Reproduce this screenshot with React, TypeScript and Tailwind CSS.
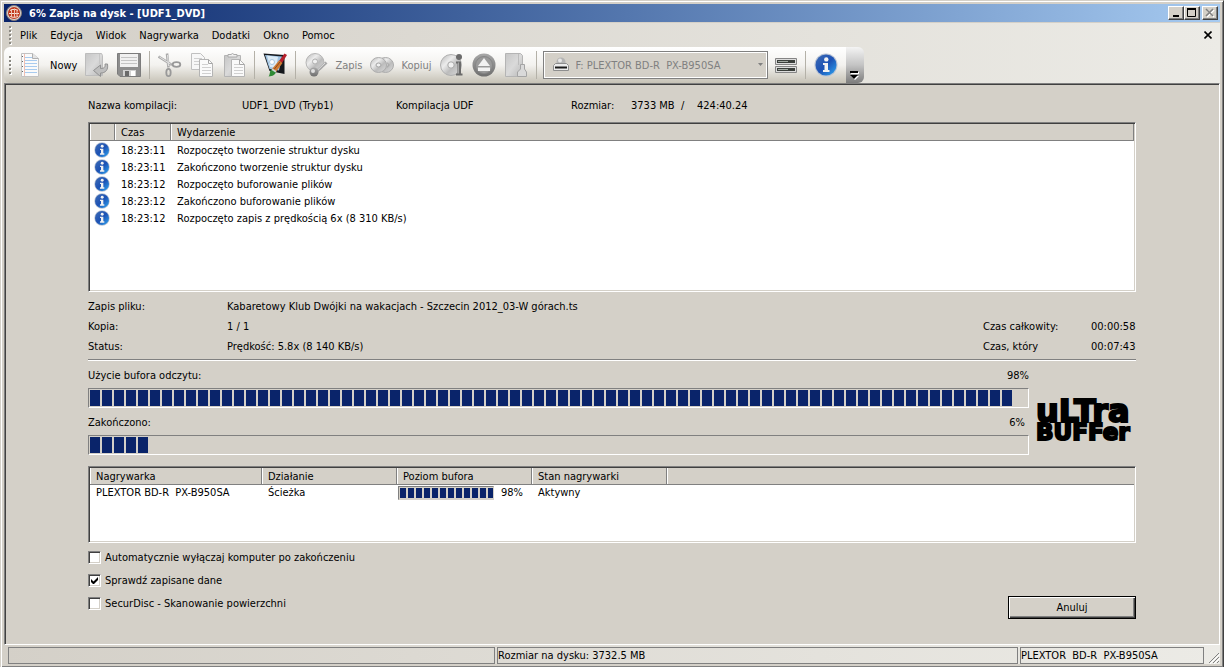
import type { ReactNode } from "react";
import clsx from "clsx";

const SUNKEN =
    "border border-[#808080] border-r-white border-b-white p-px shadow-[inset_1px_1px_#404040,inset_-1px_-1px_#d4d0c8]";

const MENU = ["Plik", "Edycja", "Widok", "Nagrywarka", "Dodatki", "Okno", "Pomoc"];

const EVENTS = [
    { time: "18:23:11", text: "Rozpoczęto tworzenie struktur dysku" },
    { time: "18:23:11", text: "Zakończono tworzenie struktur dysku" },
    { time: "18:23:12", text: "Rozpoczęto buforowanie plików" },
    { time: "18:23:12", text: "Zakończono buforowanie plików" },
    { time: "18:23:12", text: "Rozpoczęto zapis z prędkością 6x (8 310 KB/s)" },
];

const OPTIONS = [
    { id: "shutdown", label: "Automatycznie wyłączaj komputer po zakończeniu", checked: false },
    { id: "verify", label: "Sprawdź zapisane dane", checked: true },
    { id: "securdisc", label: "SecurDisc - Skanowanie powierzchni", checked: false },
];

/* ---------- icons ---------- */

function Gradients() {
    return (
        <svg width="0" height="0" className="absolute" aria-hidden="true">
            <defs>
                <linearGradient id="blue" x1="0" y1="0" x2="1" y2="1">
                    <stop offset="0" stopColor="#3f6cb4" />
                    <stop offset=".5" stopColor="#1d52b4" />
                    <stop offset="1" stopColor="#2fa8f4" />
                </linearGradient>
                <linearGradient id="grey" x1="0" y1="0" x2="1" y2="1">
                    <stop offset="0" stopColor="#c6c6c6" />
                    <stop offset=".5" stopColor="#dadada" />
                    <stop offset="1" stopColor="#b8b8b8" />
                </linearGradient>
                <linearGradient id="disc" x1="0" y1="0" x2="1" y2="1">
                    <stop offset="0" stopColor="#b4b4b4" />
                    <stop offset=".35" stopColor="#ececec" />
                    <stop offset=".6" stopColor="#bcbcbc" />
                    <stop offset="1" stopColor="#dcdcdc" />
                </linearGradient>
                <linearGradient id="dark" x1="0" y1="0" x2="0" y2="1">
                    <stop offset="0" stopColor="#a8a8a8" />
                    <stop offset="1" stopColor="#6e6e6e" />
                </linearGradient>
            </defs>
        </svg>
    );
}

function Icon({ size = 24, children }: { size?: number; children: ReactNode }) {
    return (
        <svg width={size} height={size} viewBox="0 0 24 24" fill="none" className="shrink-0" aria-hidden="true">
            {children}
        </svg>
    );
}

function InfoIcon({ size }: { size?: number }) {
    return (
        <Icon size={size}>
            <circle cx="12" cy="12" r="11.5" fill="#b9c3d4" />
            <circle cx="12" cy="12" r="10.5" fill="url(#blue)" />
            <circle cx="12.3" cy="6.4" r="2.2" fill="#f2f2f2" />
            <path d="M9 10h5v7h1.500v2H9v-2h1.500v-5H9z" fill="#f2f2f2" />
        </Icon>
    );
}

function AppIcon() {
    return (
        <svg width="16" height="16" viewBox="0 0 16 16" fill="none" aria-hidden="true">
            <circle cx="8" cy="8" r="7.5" fill="#d8d2ce" stroke="#8c7f79" />
            <circle cx="8" cy="8" r="6" fill="#c23a1c" />
            <path d="M4 5.500c2-1.500 6-1.500 8 0M3 8.500h10M4 11.500c2 1 6 1 8 0" stroke="#f6e8df" />
            <path d="M5.500 4v8M8.500 3.500v9M11 4.500v7" stroke="#eec4b2" />
        </svg>
    );
}

function NewIcon() {
    return (
        <Icon>
            <path d="M2.500.5h11l6 5v18h-17z" fill="#fafafa" stroke="#c2c2c2" />
            <path d="M13.500.5v5h6" fill="#e4e4e4" stroke="#b0b0b0" />
            <path d="M6 4.500h7M6 7.500h12M6 10.500h12M6 13.500h12M6 16.500h12M6 19.500h12" stroke="#a8cbef" />
            <path d="M5.500 1v22" stroke="#f0c0b4" />
            <path d="M3.500 3v1M3.500 8v1M3.500 13v1M3.500 18v1" stroke="#666" />
        </Icon>
    );
}

function OpenIcon() {
    return (
        <Icon>
            <path d="M.5.5h16l1 2v20H.5z" fill="url(#grey)" stroke="#bdbdbd" />
            <path d="M14.500 1v10" stroke="#c6c6c6" />
            <path
                d="M22.500 11c1 6-2 9-7 9v3.500L8.500 17.500l7-5.500v3.500c4 0 5-1.500 4.500-4.500z"
                fill="#bebebe"
                stroke="#929292"
            />
        </Icon>
    );
}

function SaveIcon() {
    return (
        <Icon>
            <path d="M.5.5h23v23H3l-2.500-2.500z" fill="#8d8d8d" stroke="#7c7c7c" />
            <path d="M3 1h18v13H3z" fill="#f0f0f0" />
            <path d="M4 4.500h16M4 7.500h16M4 10.500h16" stroke="#c4c4c4" />
            <path d="M6 17h13v6H6z" fill="#d2d2d2" />
            <path d="M14 18h4v5h-4z" fill="#fff" />
            <path d="M8 18h4v5H8z" fill="#6a6a6a" />
        </Icon>
    );
}

function CutIcon() {
    return (
        <Icon>
            <path d="M.5 3.500 14 12M9 .5l1.500 14" stroke="#ababab" strokeWidth="2.600" />
            <path d="m1.500 4 11 7M9.500 2l1 11" stroke="#e2e2e2" />
            <ellipse cx="18.500" cy="11.500" rx="3.800" ry="2.300" stroke="#999" strokeWidth="1.800" />
            <ellipse cx="10.500" cy="19.500" rx="2.200" ry="3.600" stroke="#999" strokeWidth="1.800" />
        </Icon>
    );
}

function CopyIcon() {
    return (
        <Icon>
            <path d="M1.500.5h9l4 4v12h-13z" fill="#f7f7f7" stroke="#c0c0c0" />
            <path d="M4 5.500h8M4 8.500h8M4 11.500h8" stroke="#d0d0d0" />
            <path d="M9.500 6.500h9l4 4v13h-13z" fill="#fafafa" stroke="#b4b4b4" />
            <path d="M18.500 6.500v4h4" stroke="#a6a6a6" />
            <path d="M12 11.500h6M12 14.500h9M12 17.500h9M12 20.500h9" stroke="#d0d0d0" />
        </Icon>
    );
}

function PasteIcon() {
    return (
        <Icon>
            <path d="M2.500 2.500h16v21h-16z" fill="url(#grey)" stroke="#b4b4b4" />
            <path d="M6 4V1.500h3l1.500-1 1.500 1h3V4z" fill="#eee" stroke="#aaa" />
            <path d="M9.500 6.500h8l5 5v12h-13z" fill="#fafafa" stroke="#b4b4b4" />
            <path d="M17.500 6.500v5h5" stroke="#a6a6a6" />
            <path d="M12 11.500h5M12 14.500h9M12 17.500h9M12 20.500h9" stroke="#d0d0d0" />
        </Icon>
    );
}

function CoverIcon() {
    return (
        <Icon>
            <path d="m.5.5 21 1.500v19l-15-3z" fill="#15181c" />
            <path d="m2 2 17 1.500-3 14L6.500 16z" fill="#9fc3e2" />
            <path d="M4 2.500 15 4l-2 11-6-1z" fill="#dcebf6" />
            <circle cx="9" cy="9" r="2.500" fill="#fff" stroke="#a9c6dd" />
            <path d="m21.500.5 2.500 1.500-5 8-3-2z" fill="#b5202a" />
            <path d="m16 7.500 3.500 2.500-6.500 9-4-3z" fill="#d07a32" />
            <path d="m17 9-6 7.500" stroke="#8c4a1c" />
            <path d="m9 16 4 3c-1 3-3 4-7.500 4.500 2-2 .5-5.500 3.500-7.500z" fill="#2f8a35" />
            <path d="m9.500 15.500 4 2.500-1 1.500-4-2.500z" fill="#cfd4d8" />
        </Icon>
    );
}

function BurnIcon() {
    return (
        <Icon>
            <circle cx="11" cy="9.500" r="9" fill="url(#disc)" stroke="#b5b5b5" />
            <circle cx="11" cy="8.500" r="2.500" fill="#f0f0f0" stroke="#b0b0b0" />
            <path d="m22.500 9.500-10 9" stroke="#a9a9a9" strokeWidth="3" />
            <path d="m21 10-8 7.500" stroke="#dedede" />
            <circle cx="10" cy="19" r="4.500" fill="url(#dark)" />
            <circle cx="9" cy="18" r="2" fill="#e0e0e0" />
        </Icon>
    );
}

function CopyDiscIcon() {
    return (
        <Icon>
            <ellipse cx="15.500" cy="12" rx="8" ry="7.500" fill="url(#disc)" stroke="#acacac" />
            <ellipse cx="8.500" cy="12" rx="8" ry="7.500" fill="url(#disc)" stroke="#acacac" />
            <ellipse cx="8.500" cy="12" rx="2.500" ry="2" fill="#f0f0f0" stroke="#a4a4a4" />
            <path d="M17 10c2.500.5 2.500 3.500 0 4" stroke="#a4a4a4" />
        </Icon>
    );
}

function DiscInfoIcon() {
    return (
        <Icon>
            <circle cx="11" cy="12" r="10.500" fill="url(#disc)" stroke="#b0b0b0" />
            <circle cx="11" cy="12" r="3.200" fill="#f0f0f0" stroke="#a8a8a8" />
            <circle cx="19" cy="4" r="3" fill="#6b6b6b" />
            <path d="M16 8.500h5v12h1.500v2H16v-2h1.500v-10H16z" fill="#6b6b6b" />
            <path d="M18.500 9.500v11" stroke="#a5a5a5" />
        </Icon>
    );
}

function EjectIcon() {
    return (
        <Icon>
            <circle cx="12" cy="12" r="11.500" fill="url(#dark)" />
            <circle cx="12" cy="12" r="8.500" fill="#9a9a9a" stroke="#868686" />
            <path d="m12 5 6 8H6z" fill="#f2f2f2" />
            <path d="M6 14.500h12V18H6z" fill="#f2f2f2" />
        </Icon>
    );
}

function EraseIcon() {
    return (
        <Icon>
            <path d="M1.500.5h15l2 2v21h-17z" fill="url(#grey)" stroke="#b4b4b4" />
            <path d="M14.500 1v11" stroke="#bdbdbd" />
            <path d="M13.500 23.500V19l3-3v-4.500h4V16l2 3v4.500z" fill="#d9d9d9" stroke="#a4a4a4" />
        </Icon>
    );
}

function DriveIcon() {
    return (
        <svg width="16" height="15" viewBox="0 0 16 15" fill="none" aria-hidden="true">
            <circle cx="8" cy="5" r="4.500" fill="#b4b4b4" />
            <circle cx="7" cy="3.500" r="2" fill="#e6e6e6" />
            <path d="M2.500 6.500h11l2 2v5H.5v-5z" fill="#ececec" stroke="#8e8e8e" />
            <path d="M2 10.500h12" stroke="#1c1c1c" strokeWidth="2" />
        </svg>
    );
}

function RecordersIcon() {
    return (
        <svg width="22" height="15" viewBox="0 0 22 15" fill="none" aria-hidden="true">
            <path d="M.5.5h21v6H.5zM.5 8.500h21v6H.5z" fill="#dcdcdc" stroke="#858585" />
            <path d="M2 2h18v3H2zM2 10h18v3H2z" fill="#3b3f3b" />
            <path d="M3 3.500h10M3 11.500h10" stroke="#a1a8a1" />
        </svg>
    );
}

/* ---------- small controls ---------- */

function Separator() {
    return <span className="h-7 w-px shrink-0 bg-[#b4b1a8]" />;
}

function Grip() {
    return (
        <span className="flex w-[3px] shrink-0 flex-col gap-[2px]">
            {[0, 1, 2, 3, 4].map((i) => (
                <i key={i} className="size-[2px] bg-[#8b8982] shadow-[1px_1px_#fff]" />
            ))}
        </span>
    );
}

function ToolButton({ label, text, children }: { label: string; text?: string; children: ReactNode }) {
    return (
        <button type="button" aria-label={label} className="flex shrink-0 items-center gap-[7px]">
            {children}
            {text && <span className={text === "Nowy" ? "text-black" : "text-[#808080]"}>{text}</span>}
        </button>
    );
}

function Progress({ label, value, blocks, small }: { label: string; value: number; blocks: number; small?: boolean }) {
    return (
        <div
            role="progressbar"
            aria-label={label}
            aria-valuenow={value}
            className={clsx(
                "flex gap-[2px] overflow-hidden border border-[#808080] bg-[#d4d0c8] p-px",
                small ? "h-[14px] w-24 border-r-[#d4d0c8] border-b-[#d4d0c8]" : "h-5 border-r-white border-b-white",
            )}
        >
            {Array.from({ length: blocks }, (_, i) => (
                <span key={i} className={clsx("shrink-0 bg-[#0a246a]", small ? "w-[6px]" : "w-[10px]")} />
            ))}
        </div>
    );
}

function Th({ className, children }: { className?: string; children?: ReactNode }) {
    return (
        <th
            className={clsx(
                "h-[17px] border-r border-b border-[#808080] bg-[#d4d0c8] p-0 pl-[6px] text-left font-normal shadow-[inset_1px_0_#fff]",
                className,
            )}
        >
            {children}
        </th>
    );
}

function CaptionButton({ label, children }: { label: string; children: ReactNode }) {
    return (
        <button
            type="button"
            aria-label={label}
            className="flex h-[14px] w-4 items-center justify-center border border-white border-r-[#404040] border-b-[#404040] bg-[#d4d0c8] shadow-[inset_-1px_-1px_#808080]"
        >
            {children}
        </button>
    );
}

/* ---------- window parts ---------- */

function TitleBar() {
    return (
        <header className="flex h-[18px] items-center bg-linear-to-r from-[#0a246a] to-[#a6caf0] pr-[2px] pl-[2px]">
            <AppIcon />
            <h1 className="ml-[7px] flex-1 text-[11px] font-bold text-white">6% Zapis na dysk - [UDF1_DVD]</h1>
            <CaptionButton label="Minimalizuj">
                <svg width="12" height="10" viewBox="0 0 12 10">
                    <path d="M3 7h6v2H3z" />
                </svg>
            </CaptionButton>
            <CaptionButton label="Maksymalizuj">
                <svg width="12" height="10" viewBox="0 0 12 10" fill="none" stroke="#000">
                    <path d="M1.500 1v7.500h8V1M1 1.500h9" />
                    <path d="M1 .5h9" />
                </svg>
            </CaptionButton>
            <span className="w-[2px]" />
            <CaptionButton label="Zamknij">
                <svg width="12" height="10" viewBox="0 0 12 10" fill="none" strokeWidth="1.600">
                    <path d="m3 2 7 7m0-7L3 9" stroke="#fff" />
                    <path d="m2 1 7 7m0-7L2 8" stroke="#808080" />
                </svg>
            </CaptionButton>
        </header>
    );
}

function MenuBar() {
    return (
        <nav className="flex h-6 items-center pr-2 pl-[5px]">
            <Grip />
            <ul className="ml-[8px] flex flex-1 gap-[13px]">
                {MENU.map((item) => (
                    <li key={item}>
                        <button type="button">{item}</button>
                    </li>
                ))}
            </ul>
            <button type="button" aria-label="Zamknij dokument">
                <svg width="8" height="8" viewBox="0 0 8 8" stroke="#000" strokeWidth="1.600">
                    <path d="m.5.5 7 7m0-7-7 7" />
                </svg>
            </button>
        </nav>
    );
}

function Toolbar() {
    return (
        <div className="flex h-9">
            <div className="flex items-center rounded-l-md bg-linear-to-b from-white via-[#f3f2ef] to-[#c6c2b6] pr-2 pl-[5px]">
                <Grip />
                <div className="ml-[7px] flex items-center gap-2">
                    <ToolButton label="Nowy" text="Nowy">
                        <NewIcon />
                    </ToolButton>
                    <ToolButton label="Otwórz">
                        <OpenIcon />
                    </ToolButton>
                    <ToolButton label="Zapisz">
                        <SaveIcon />
                    </ToolButton>
                    <Separator />
                    <ToolButton label="Wytnij">
                        <CutIcon />
                    </ToolButton>
                    <ToolButton label="Kopiuj zaznaczenie">
                        <CopyIcon />
                    </ToolButton>
                    <ToolButton label="Wklej">
                        <PasteIcon />
                    </ToolButton>
                    <Separator />
                    <ToolButton label="Projektant okładek">
                        <CoverIcon />
                    </ToolButton>
                    <Separator />
                    <ToolButton label="Zapis" text="Zapis">
                        <BurnIcon />
                    </ToolButton>
                    <ToolButton label="Kopiuj" text="Kopiuj">
                        <CopyDiscIcon />
                    </ToolButton>
                    <ToolButton label="Informacje o dysku">
                        <DiscInfoIcon />
                    </ToolButton>
                    <ToolButton label="Wysuń">
                        <EjectIcon />
                    </ToolButton>
                    <ToolButton label="Wymaż">
                        <EraseIcon />
                    </ToolButton>
                    <Separator />
                </div>
                <div className="relative ml-[6px]">
                    <select
                        aria-label="Nagrywarka"
                        disabled
                        className="block h-7 w-[225px] appearance-none border border-[#808080] bg-[#d4d0c8] pl-8 text-[#808080] opacity-100 shadow-[inset_0_0_0_1px_#fff]"
                    >
                        <option>F: PLEXTOR BD-R{"\u00a0 "}PX-B950SA</option>
                    </select>
                    <span className="pointer-events-none absolute top-[6px] left-[10px]">
                        <DriveIcon />
                    </span>
                    <svg width="5" height="3" viewBox="0 0 5 3" className="pointer-events-none absolute top-3 right-[5px]">
                        <path d="M0 0h5L2.500 3z" fill="#808080" />
                    </svg>
                </div>
                <div className="ml-[7px] flex items-center gap-2">
                    <button type="button" aria-label="Wybierz nagrywarkę">
                        <RecordersIcon />
                    </button>
                    <Separator />
                    <ToolButton label="Informacje">
                        <InfoIcon />
                    </ToolButton>
                </div>
            </div>
            <button
                type="button"
                aria-label="Opcje paska narzędzi"
                className="flex w-[18px] items-end justify-center rounded-r-md bg-linear-to-b from-[#f4f4f4] via-[#c4c4c4] to-[#7d7d7d] pb-[3px]"
            >
                <svg width="9" height="9" viewBox="0 0 9 9">
                    <path d="M1 1h8v2H1zM1 5h8L5 9z" fill="#fff" />
                    <path d="M0 0h8v2H0zM0 4h8L4 8z" />
                </svg>
            </button>
        </div>
    );
}

function EventLog() {
    return (
        <div className={clsx("mt-[7px] h-[170px] bg-white", SUNKEN)}>
            <table className="w-full table-fixed border-separate border-spacing-0">
                <thead>
                    <tr>
                        <Th className="w-[25px]" />
                        <Th className="w-14">Czas</Th>
                        <Th>Wydarzenie</Th>
                    </tr>
                </thead>
                <tbody>
                    {EVENTS.map((e, i) => (
                        <tr key={i} className="h-[17px]">
                            <td className="p-0 pl-[4px]">
                                <InfoIcon size={16} />
                            </td>
                            <td className="p-0 pt-[2px] pl-[6px]">{e.time}</td>
                            <td className="p-0 pt-[2px] pl-[6px]">{e.text}</td>
                        </tr>
                    ))}
                </tbody>
            </table>
        </div>
    );
}

function RecorderTable() {
    return (
        <div className={clsx("mt-[11px] h-[77px] bg-white", SUNKEN)}>
            <table className="w-full table-fixed border-separate border-spacing-0">
                <thead>
                    <tr>
                        <Th className="w-[172px]">Nagrywarka</Th>
                        <Th className="w-[135px]">Działanie</Th>
                        <Th className="w-[135px]">Poziom bufora</Th>
                        <Th className="w-[135px]">Stan nagrywarki</Th>
                        <Th className="border-r-0" />
                    </tr>
                </thead>
                <tbody>
                    <tr className="leading-[14px]">
                        <td className="p-0 pt-px pl-[6px]">PLEXTOR BD-R{"\u00a0 "}PX-B950SA</td>
                        <td className="p-0 pt-px pl-[6px]">Ścieżka</td>
                        <td className="p-0 pl-px">
                            <div className="flex items-center gap-[7px]">
                                <Progress label="Poziom bufora" value={98} blocks={12} small />
                                98%
                            </div>
                        </td>
                        <td className="p-0 pt-px pl-[6px]">Aktywny</td>
                        <td />
                    </tr>
                </tbody>
            </table>
        </div>
    );
}

function UltraBufferLogo() {
    return (
        <svg
            width="100"
            height="44"
            viewBox="0 0 100 44"
            role="img"
            aria-label="Ultra Buffer"
            stroke="#000"
            strokeWidth="2"
            className="mt-5 shrink-0 overflow-visible font-['DejaVu_Sans'] font-bold"
        >
            <text x="0" y="24" fontSize="32">
                uLTra
            </text>
            <text x="0" y="42" fontSize="23">
                BUFFer
            </text>
        </svg>
    );
}

function Checkbox({ id, label, checked }: { id: string; label: string; checked: boolean }) {
    return (
        <label htmlFor={id} className="flex h-[23px] items-center gap-1">
            <span className="relative size-[13px]">
                <input
                    id={id}
                    type="checkbox"
                    defaultChecked={checked}
                    className={clsx("peer block size-[13px] appearance-none bg-white", SUNKEN)}
                />
                <svg
                    width="7"
                    height="7"
                    viewBox="0 0 7 7"
                    className="pointer-events-none absolute top-[3px] left-[3px] hidden peer-checked:block"
                >
                    <path d="M0 2v3l2 2h1l4-4V0L2.500 4.500z" />
                </svg>
            </span>
            {label}
        </label>
    );
}

function StatusBar() {
    return (
        <footer className="flex h-[19px] gap-[2px] bg-linear-to-r from-[#d4d0c8] to-[#ecebe6] pt-[2px] pl-1 leading-[15px]">
            <div className="w-[487px] border border-[#808080]" />
            <div className="flex-1 border border-[#808080]">Rozmiar na dysku: 3732.5 MB</div>
            <div className="w-[184px] border border-[#808080]">PLEXTOR{"\u00a0 "}BD-R{"\u00a0 "}PX-B950SA</div>
            <svg width="13" height="17" viewBox="0 0 13 17" stroke="#808080" className="ml-px">
                <path d="M2 16 12 6M6 16l6-6M10 16l2-2" />
                <path d="M3 17 13 7M7 17l6-6" stroke="#fff" />
            </svg>
        </footer>
    );
}

export default function App() {
    return (
        <div className="flex min-h-screen flex-col border border-[#d4d0c8] border-r-[#404040] border-b-[#404040] bg-[#d4d0c8] p-[3px] font-['DejaVu_Sans_Condensed','DejaVu_Sans',sans-serif] text-[11px] leading-[15px] text-black shadow-[inset_1px_1px_#fff,inset_-1px_-1px_#808080]">
            <Gradients />
            <TitleBar />
            <div className="mt-px bg-linear-to-r from-[#d4d0c8] to-[#ecebe6]">
                <MenuBar />
                <Toolbar />
            </div>

            <main className={clsx("flex-1", SUNKEN)}>
                <div className="px-[82px] pt-[10px] pb-6">
                    <div className="grid h-5 grid-cols-[154px_154px_175px_60px_66px_1fr] items-center whitespace-pre">
                        <span>Nazwa kompilacji:</span>
                        <span>UDF1_DVD (Tryb1)</span>
                        <span>Kompilacja UDF</span>
                        <span>Rozmiar:</span>
                        <span>3733 MB{"  "}/</span>
                        <span>424:40.24</span>
                    </div>

                    <EventLog />

                    <div className="mt-1 grid auto-rows-[20px] grid-cols-[139px_1fr_108px_45px] items-center whitespace-nowrap">
                        <span>Zapis pliku:</span>
                        <span className="col-span-3">
                            Kabaretowy Klub Dwójki na wakacjach - Szczecin 2012_03-W górach.ts
                        </span>
                        <span>Kopia:</span>
                        <span>1 / 1</span>
                        <span>Czas całkowity:</span>
                        <span>00:00:58</span>
                        <span>Status:</span>
                        <span>Prędkość: 5.8x (8 140 KB/s)</span>
                        <span>Czas, który</span>
                        <span>00:07:43</span>
                    </div>

                    <hr className="mt-[3px] h-[2px] border-t border-b border-t-[#808080] border-b-white" />

                    <div className="mt-1 flex items-center gap-[7px]">
                        <div className="min-w-0 flex-1">
                            <div className="flex h-5 items-center justify-between">
                                <span>Użycie bufora odczytu:</span>
                                <span>98%</span>
                            </div>
                            <div className="mt-[3px]">
                                <Progress label="Użycie bufora odczytu" value={98} blocks={77} />
                            </div>
                            <div className="mt-1 flex h-5 items-center justify-between pr-1">
                                <span>Zakończono:</span>
                                <span>6%</span>
                            </div>
                            <div className="mt-[3px]">
                                <Progress label="Zakończono" value={6} blocks={5} />
                            </div>
                        </div>
                        <UltraBufferLogo />
                    </div>

                    <RecorderTable />

                    <div className="mt-[3px] flex items-end justify-between">
                        <div className="pb-1">
                            {OPTIONS.map((o) => (
                                <Checkbox key={o.id} {...o} />
                            ))}
                        </div>
                        <button
                            type="button"
                            className="h-[23px] w-32 border border-black bg-[#d4d0c8] shadow-[inset_1px_1px_#fff,inset_-1px_-1px_#404040,inset_-2px_-2px_#808080]"
                        >
                            Anuluj
                        </button>
                    </div>
                </div>
            </main>

            <StatusBar />
        </div>
    );
}
